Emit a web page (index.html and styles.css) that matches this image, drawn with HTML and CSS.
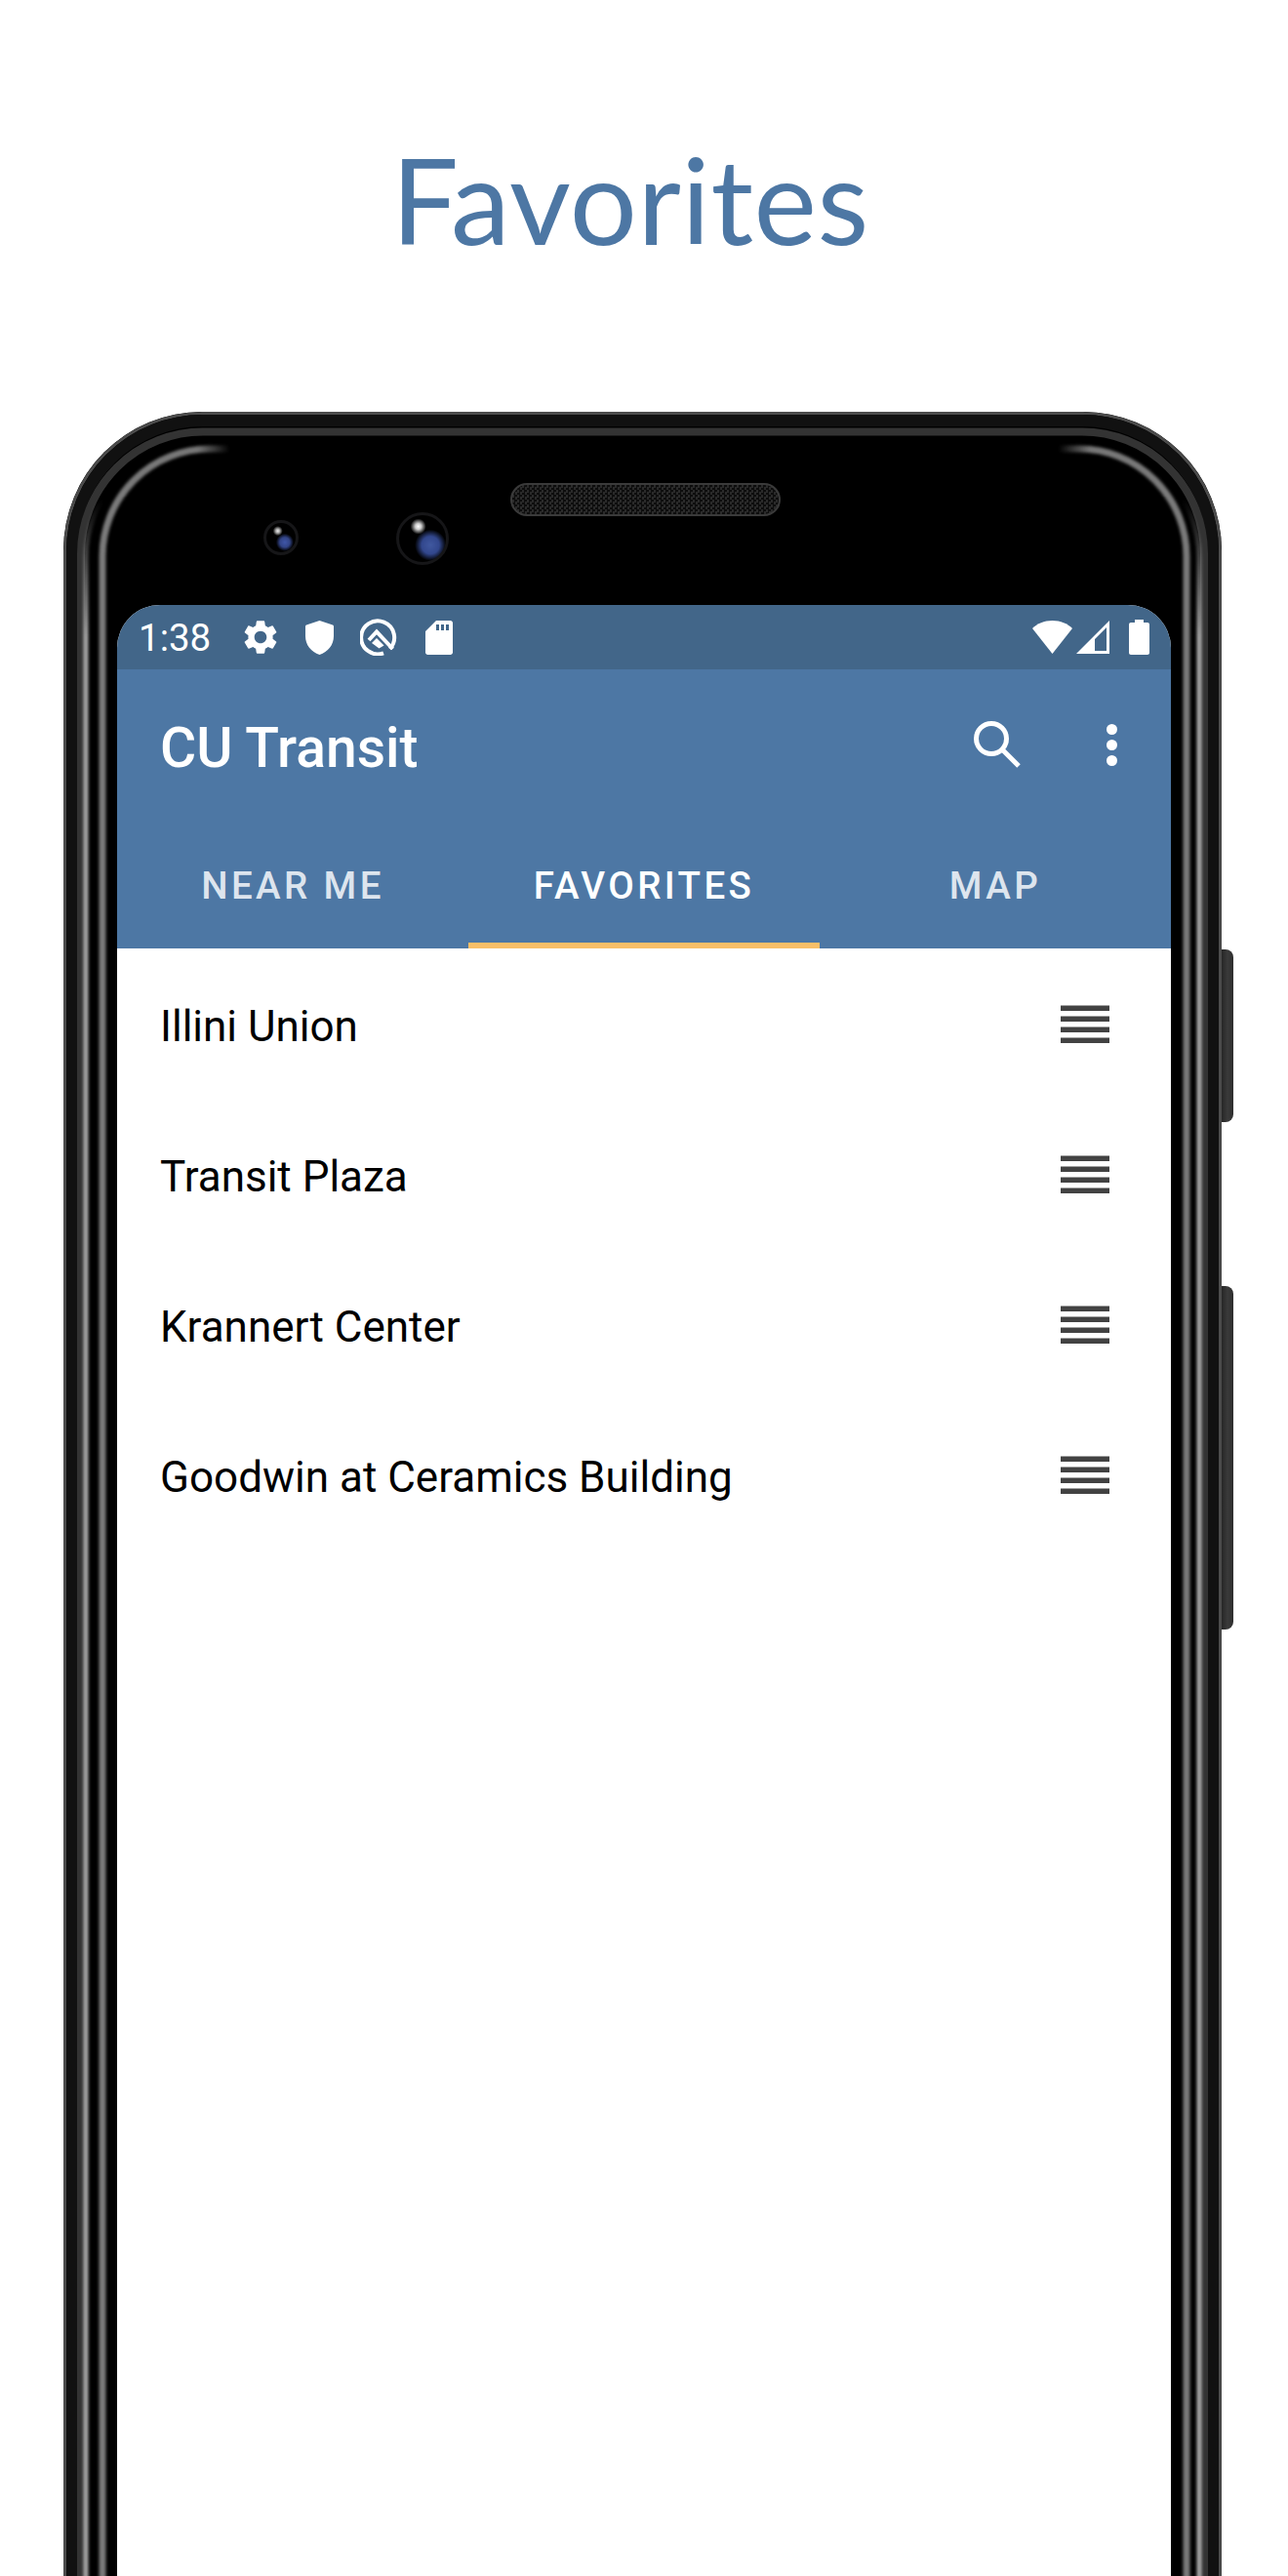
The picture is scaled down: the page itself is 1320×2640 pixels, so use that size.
FILE: index.html
```html
<!DOCTYPE html>
<html lang="en">
<head>
    <meta charset="UTF-8">
    <meta name="viewport" content="width=device-width, initial-scale=1.0">
    <title>CU Transit - Favorites</title>
    <link rel="stylesheet" href="styles.css">
</head>
<body>
    <div class="page">
        <h1 class="page-title">Favorites</h1>

        <div class="phone">
            <!-- metal rim, drawn in phone coordinates -->
            <svg class="phone-rim" width="1187" height="2218" viewBox="0 0 1187 2218" fill="none">
                <defs>
                    <linearGradient id="sideShine" gradientUnits="userSpaceOnUse" x1="0" y1="90" x2="0" y2="230">
                        <stop offset="0" stop-color="#aaa" stop-opacity="0"/>
                        <stop offset="1" stop-color="#a8a8a8"/>
                    </linearGradient>
                    <linearGradient id="innerLeft" gradientUnits="userSpaceOnUse" x1="40" y1="0" x2="170" y2="0">
                        <stop offset="0" stop-color="#7a7a7a"/>
                        <stop offset="0.75" stop-color="#777"/>
                        <stop offset="1" stop-color="#777" stop-opacity="0"/>
                    </linearGradient>
                    <linearGradient id="innerRight" gradientUnits="userSpaceOnUse" x1="1151" y1="0" x2="1020" y2="0">
                        <stop offset="0" stop-color="#7a7a7a"/>
                        <stop offset="0.75" stop-color="#777"/>
                        <stop offset="1" stop-color="#777" stop-opacity="0"/>
                    </linearGradient>
                    <filter id="soft"><feGaussianBlur stdDeviation="1.4"/></filter>
                </defs>
                <rect x="1.5" y="1.5" width="1184" height="2400" rx="141" stroke="#4c4c4c" stroke-width="3"/>
                <rect x="9" y="9" width="1169" height="2400" rx="134" stroke="#111" stroke-width="12"/>
                <rect x="18" y="20.500" width="1151" height="2400" rx="125" stroke="#333" stroke-width="8"/>
                <path d="M23 2300V150A120 120 0 0 1 143 30" stroke="url(#sideShine)" stroke-width="5" filter="url(#soft)"/>
                <path d="M1164 2300V150A120 120 0 0 0 1044 30" stroke="url(#sideShine)" stroke-width="5" filter="url(#soft)"/>
                <path d="M40 2300V148A110 110 0 0 1 150 38H170" stroke="url(#innerLeft)" stroke-width="7" filter="url(#soft)"/>
                <path d="M1151 2300V148A110 110 0 0 0 1041 38H1020" stroke="url(#innerRight)" stroke-width="7" filter="url(#soft)"/>
            </svg>
            <div class="side-key side-key-power"></div>
            <div class="side-key side-key-volume"></div>

            <div class="bezel">
                <div class="camera camera-small"></div>
                <div class="camera camera-large"></div>
                <div class="speaker"></div>
            </div>

            <div class="screen">
                <div class="status-bar">
                    <span class="clock">1:38</span>
                    <svg class="icon-gear" width="42" height="42" viewBox="0 0 24 24" fill="#fff"><path fill-rule="evenodd" d="M19.14 12.94c.04-.3.06-.61.06-.94 0-.32-.02-.64-.07-.94l2.03-1.58a.49.49 0 0 0 .12-.61l-1.92-3.32a.488.488 0 0 0-.59-.22l-2.39.96c-.5-.38-1.03-.7-1.62-.94l-.36-2.54a.484.484 0 0 0-.48-.41h-3.84c-.24 0-.43.17-.47.41l-.36 2.54c-.59.24-1.13.57-1.62.94l-2.39-.96c-.22-.08-.47 0-.59.22L2.74 8.87c-.12.21-.08.47.12.61l2.03 1.58c-.05.3-.09.63-.09.94s.02.64.07.94l-2.03 1.58a.49.49 0 0 0-.12.61l1.92 3.32c.12.22.37.29.59.22l2.39-.96c.5.38 1.03.7 1.62.94l.36 2.54c.05.24.24.41.48.41h3.84c.24 0 .44-.17.47-.41l.36-2.54c.59-.24 1.13-.56 1.62-.94l2.39.96c.22.08.47 0 .59-.22l1.92-3.32c.12-.22.07-.47-.12-.61l-2.01-1.58zM12 15.6c-1.98 0-3.6-1.62-3.6-3.6s1.62-3.6 3.6-3.6 3.6 1.62 3.6 3.6-1.62 3.6-3.6 3.6z"/></svg>
                    <svg class="icon-shield" width="29" height="35" viewBox="0 0 29 35" fill="#fff"><path d="M14.5 0L28 4.6c.6.2 1 .7 1 1.4V16c0 9-5.800 16-14.500 19C5.800 32 0 25 0 16V6c0-.7.4-1.200 1-1.400z"/></svg>
                    <svg class="icon-beta" width="38" height="38" viewBox="0 0 38 38" fill="none" stroke="#fff"><path stroke-width="4" d="M30.500 31A17 17 0 1 0 24 35.300"/><path stroke-width="4" d="M9 22L17 13.500L33.500 31"/><path fill="#fff" stroke="none" d="M17 20L24.500 27.500L19.500 30.500L12 25z"/></svg>
                    <svg class="icon-sd" width="28" height="35" viewBox="0 0 28 35" fill="#fff"><path fill-rule="evenodd" d="M11 0H25.500C26.900 0 28 1.100 28 2.500V32.500C28 33.900 26.900 35 25.500 35H2.500C1.100 35 0 33.900 0 32.500V11zM11 4V10H14V4zM16 4V10H19V4zM21 4V10H24V4z"/></svg>
                    <div class="status-right">
                        <svg width="41" height="34" viewBox="0 0 41 34" fill="#fff"><path d="M0 8C5 3 12 0 20.500 0C29 0 36 3 41 8L20.500 34z"/></svg>
                        <svg width="34" height="34" viewBox="0 0 34 34" fill="#fff"><path fill-rule="evenodd" d="M0 34L34 0V34zM19 31H31V7L19 19z"/></svg>
                        <svg class="icon-battery" width="21" height="36" viewBox="0 0 21 36" fill="#fff"><path d="M6 0H15V3H19C20.100 3 21 3.900 21 5V34C21 35.100 20.100 36 19 36H2C.9 36 0 35.100 0 34V5C0 3.900.9 3 2 3H6z"/></svg>
                    </div>
                </div>

                <div class="toolbar">
                    <span class="app-name">CU Transit</span>
                    <svg class="icon-search" width="48" height="48" viewBox="0 0 48 48" fill="none" stroke="#fff" stroke-width="5"><circle cx="18" cy="18" r="15.500"/><path d="M29.500 29.500L46 46"/></svg>
                    <svg class="icon-more" width="11" height="43" viewBox="0 0 11 43" fill="#fff"><circle cx="5.500" cy="5.500" r="5.500"/><circle cx="5.500" cy="21.500" r="5.500"/><circle cx="5.500" cy="37.500" r="5.500"/></svg>
                </div>

                <div class="tabs">
                    <div class="tab">NEAR ME</div>
                    <div class="tab tab-active">FAVORITES</div>
                    <div class="tab">MAP</div>
                </div>

                <div class="stop-list">
                    <div class="stop-row">
                        <span class="stop-name">Illini Union</span>
                        <svg width="50" height="39" viewBox="0 0 50 39" fill="#424242"><rect y="0.500" width="50" height="5.500"/><rect y="11.500" width="50" height="5.500"/><rect y="22.500" width="50" height="5.500"/><rect y="33.500" width="50" height="5.500"/></svg>
                    </div>
                    <div class="stop-row">
                        <span class="stop-name">Transit Plaza</span>
                        <svg width="50" height="39" viewBox="0 0 50 39" fill="#424242"><rect y="0.500" width="50" height="5.500"/><rect y="11.500" width="50" height="5.500"/><rect y="22.500" width="50" height="5.500"/><rect y="33.500" width="50" height="5.500"/></svg>
                    </div>
                    <div class="stop-row">
                        <span class="stop-name">Krannert Center</span>
                        <svg width="50" height="39" viewBox="0 0 50 39" fill="#424242"><rect y="0.500" width="50" height="5.500"/><rect y="11.500" width="50" height="5.500"/><rect y="22.500" width="50" height="5.500"/><rect y="33.500" width="50" height="5.500"/></svg>
                    </div>
                    <div class="stop-row">
                        <span class="stop-name">Goodwin at Ceramics Building</span>
                        <svg width="50" height="39" viewBox="0 0 50 39" fill="#424242"><rect y="0.500" width="50" height="5.500"/><rect y="11.500" width="50" height="5.500"/><rect y="22.500" width="50" height="5.500"/><rect y="33.500" width="50" height="5.500"/></svg>
                    </div>
                </div>
            </div>
        </div>
    </div>
</body>
</html>
```

FILE: styles.css
```css
body {
    margin: 0;
    background-color: #fff;
    font-family: 'Roboto', 'Liberation Sans', sans-serif;
}
svg {
    display: block;
    flex-shrink: 0;
}
.page {
    width: 1320px;
    height: 2640px;
    overflow: hidden;
}
.page-title {
    height: 422px;
    box-sizing: border-box;
    margin: 0;
    padding: 143px 28px 0 0;
    font-family: 'Lato', 'Open Sans', sans-serif;
    font-size: 122px;
    font-weight: 400;
    letter-spacing: 0.6px;
    line-height: 1;
    text-align: center;
    color: #4d77a4;
}

/* phone body */
.phone {
    position: relative;
    width: 1187px;
    height: 2218px;
    margin-left: 65px;
    box-sizing: border-box;
    padding: 0 52px 0 55px;
    background-color: #000;
    border-radius: 142px 142px 0 0;
}
.phone-rim {
    position: absolute;
    left: 0;
    top: 0;
    border-radius: 142px 142px 0 0;
}
.side-key {
    position: absolute;
    left: 100%;
    width: 12px;
    box-sizing: border-box;
    background: linear-gradient(to right, #262626, #3a3a3a 50%, #2e2e2e);
    border-radius: 0 8px 8px 0;
}
.side-key-power {
    top: 551px;
    height: 177px;
}
.side-key-volume {
    top: 896px;
    height: 352px;
}
.bezel {
    position: relative;
    display: flex;
    align-items: flex-start;
    height: 198px;
    box-sizing: border-box;
    padding: 73px 0 0 150px;
}
.camera {
    flex-shrink: 0;
    border-radius: 50%;
    box-sizing: border-box;
    border: 3px solid #161618;
}
.camera-small {
    width: 36px;
    height: 36px;
    margin-top: 38px;
    background:
        radial-gradient(circle at 39% 27%, #eee 0, #aaa 2px, rgba(0, 0, 0, 0) 5px),
        radial-gradient(circle at 63% 66%, #3f56a8 0, #324487 5px, rgba(0, 0, 0, 0) 9px),
        #000;
}
.camera-large {
    width: 54px;
    height: 54px;
    margin-top: 30px;
    margin-left: 100px;
    background:
        radial-gradient(circle at 41% 24%, #fff 0, #ccc 3px, rgba(0, 0, 0, 0) 8px),
        radial-gradient(circle at 67% 64%, #40589f 0, #32478d 9px, rgba(0, 0, 0, 0) 16px),
        #000;
}
.speaker {
    width: 277px;
    height: 34px;
    box-sizing: border-box;
    margin-left: 63px;
    border: 2px solid #3a3a3a;
    border-radius: 17px;
    background-color: #1c1c1c;
    background-image: conic-gradient(#0d0d0d 25%, #2a2a2a 0 50%, #0d0d0d 0 75%, #2a2a2a 0);
    background-size: 5px 5px;
}

/* app screen */
.screen {
    position: relative;
    width: 1080px;
    height: 2020px;
    overflow: hidden;
    background-color: #fff;
    border-radius: 44px 44px 0 0;
}
.status-bar {
    display: flex;
    align-items: center;
    height: 66px;
    box-sizing: border-box;
    padding: 0 22px 0 22px;
    background-color: #426689;
}
.clock {
    width: 104px;
    font-size: 38.5px;
    color: #fff;
}
.icon-shield {
    margin-left: 25px;
}
.icon-beta {
    margin-left: 27px;
}
.icon-sd {
    margin-left: 29px;
}
.status-right {
    display: flex;
    align-items: center;
    margin-left: auto;
}
.status-right svg + svg {
    margin-left: 4px;
}
.status-right .icon-battery {
    margin-left: 20px;
}
.toolbar {
    display: flex;
    align-items: center;
    height: 154px;
    box-sizing: border-box;
    padding: 0 55px 0 44px;
    background-color: #4d77a4;
}
.app-name {
    flex: 1;
    padding-top: 6px;
    font-size: 57px;
    font-weight: 500;
    color: #fff;
}
.icon-more {
    margin-left: 88px;
}
.tabs {
    display: flex;
    height: 132px;
    background-color: #4d77a4;
}
.tab {
    flex: 1;
    box-sizing: border-box;
    padding-top: 9px;
    display: flex;
    align-items: center;
    justify-content: center;
    font-size: 38.5px;
    font-weight: 500;
    letter-spacing: 3.4px;
    color: #dde5ee;
    border-bottom: 6px solid transparent;
}
.tab-active {
    color: #fff;
    border-bottom-color: #f9bf68;
}
.stop-row {
    display: flex;
    align-items: center;
    justify-content: space-between;
    height: 154px;
    box-sizing: border-box;
    padding: 0 63px 0 44px;
    font-size: 44px;
    color: #000;
}
.stop-name {
    padding-top: 5px;
}
```
